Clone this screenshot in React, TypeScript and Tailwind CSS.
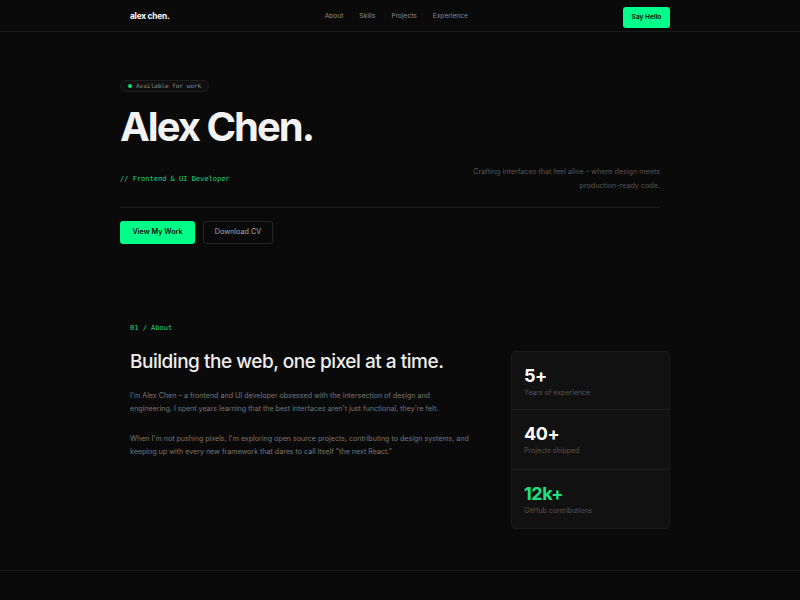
import React from "react";

const sans = "font-['Inter','Liberation_Sans',sans-serif]";
const mono = "font-['DejaVu_Sans_Mono','Liberation_Mono',monospace]";

const stats = [
  { value: "5+", label: "Years of experience", accent: false },
  { value: "40+", label: "Projects shipped", accent: false },
  { value: "12k+", label: "GitHub contributions", accent: true },
];

function Nav() {
  return (
    <nav className="h-[32px] border-b border-[#1a1a1a]">
      <div className="mx-auto flex h-full w-[540px] items-center justify-between pt-[2px]">
        <span className="text-[8.3px] font-bold tracking-tight text-white">alex chen.</span>
        <div className="flex gap-4 text-[6.6px] text-[#8a8a8a]">
          <span>About</span>
          <span>Skills</span>
          <span>Projects</span>
          <span>Experience</span>
        </div>
        <button className="mt-[2px] flex h-[21px] w-[47px] items-center justify-center rounded-[3px] bg-[#00ff88] text-[6.6px] font-semibold text-[#0a0a0a]">
          Say Hello
        </button>
      </div>
    </nav>
  );
}

function Hero() {
  return (
    <section className="ml-[120px] w-[540px] pt-[48px]">
      <div className="flex h-[12px] w-fit items-center gap-[4px] rounded-full border border-[#1e1e1e] bg-[#0f0f0f] pl-[7px] pr-[7px]">
        <span className="h-[4px] w-[4px] rounded-full bg-[#00e67a]" />
        <span className={`${mono} text-[6px] leading-none text-[#8a8a8a]`}>Available for work</span>
      </div>
      <h1 className="mt-[15px] text-[40px] font-bold leading-none tracking-[-0.05em] text-[#f2f2f2]">
        Alex Chen.
      </h1>
      <div className="mt-[18px] flex items-center justify-between border-b border-[#1c1c1c] pb-[15px]">
        <p className={`${mono} text-[7px] leading-[10px] text-[#1fd67c]`}>// Frontend &amp; UI Developer</p>
        <p className="text-right text-[7.2px] leading-[13.5px] text-[#555]">
          Crafting interfaces that feel alive – where design meets
          <br />
          production-ready code.
        </p>
      </div>
      <div className="mt-[13px] flex gap-2">
        <button className="flex h-[23px] w-[75px] items-center justify-center rounded-[3px] bg-[#00ff88] text-[7.2px] font-semibold text-[#0a0a0a]">
          View My Work
        </button>
        <button className="flex h-[23px] w-[70px] items-center justify-center rounded-[3px] border border-[#262626] text-[7.2px] text-[#aaa]">
          Download CV
        </button>
      </div>
    </section>
  );
}

function About() {
  return (
    <section className="mx-auto mt-[79px] w-[540px] pb-[41px]">
      <p className={`${mono} text-[7px] leading-[10px] text-[#1fd67c]`}>01 / About</p>
      <div className="mt-[18px] grid grid-cols-[1fr_159px] gap-10">
        <div>
          <h2 className="text-[19px] font-medium leading-[22px] tracking-tight text-[#eee]">
            Building the web, one pixel at a time.
          </h2>
          <p className="mt-[16px] whitespace-nowrap text-[7.1px] leading-[13.3px] text-[#777]">
            I'm Alex Chen – a frontend and UI developer obsessed with the intersection of design and
            <br />
            engineering. I spent years learning that the best interfaces aren't just functional, they're felt.
          </p>
          <p className="mt-[16px] whitespace-nowrap text-[7.1px] leading-[13.3px] text-[#777]">
            When I'm not pushing pixels, I'm exploring open source projects, contributing to design systems, and
            <br />
            keeping up with every new framework that dares to call itself "the next React."
          </p>
        </div>
        <div className="divide-y divide-[#1c1c1c] rounded-[4px] border border-[#1a1a1a] bg-[#111]">
          {stats.map((s) => (
            <div key={s.value} className={`px-3 pt-[13px] ${s.value === "40+" ? "h-[60px]" : "h-[58px]"}`}>
              <div
                className={`text-[18px] font-bold leading-[22px] tracking-tight ${s.accent ? "text-[#1fe082]" : "text-white"}`}
              >
                {s.value}
              </div>
              <div className="mt-[1px] text-[7px] leading-[10px] text-[#555]">{s.label}</div>
            </div>
          ))}
        </div>
      </div>
    </section>
  );
}

export default function App() {
  return (
    <div className={`${sans} min-h-screen bg-[#0a0a0a]`}>
      <Nav />
      <Hero />
      <About />
      <footer className="h-[30px] border-t border-[#1a1a1a]" />
    </div>
  );
}
